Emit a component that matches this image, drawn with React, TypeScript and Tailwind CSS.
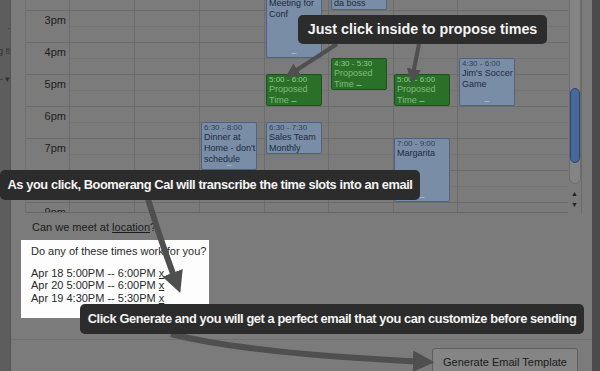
import React from 'react'

type CalEvent = {
    left: number
    top: number
    h: number
    time: string
    lines: string[]
    green?: boolean
    noGrip?: boolean
}

// positions are relative to the grid body (y = 0 at 2pm, 32px per hour)
const events: CalEvent[] = [
    { left: 240, top: -1, h: 81, time: '2:00 - 4:30', lines: ['Planning', 'Meeting for', 'Conf'] },
    { left: 305, top: -1, h: 33, time: '2:00 - 3:00', lines: ['Call with', 'da boss'], noGrip: true },
    { left: 305, top: 80, h: 32, time: '4:30 - 5:30', lines: ['Proposed', 'Time'], green: true },
    { left: 240, top: 96, h: 32, time: '5:00 - 6:00', lines: ['Proposed', 'Time'], green: true },
    { left: 368, top: 96, h: 32, time: '5:00 - 6:00', lines: ['Proposed', 'Time'], green: true },
    { left: 433, top: 80, h: 48, time: '4:30 - 6:00', lines: ["Jim's Soccer", 'Game'] },
    { left: 175, top: 144, h: 48, time: '6:30 - 8:00', lines: ['Dinner at', "Home - don't", 'schedule'] },
    { left: 240, top: 144, h: 32, time: '6:30 - 7:30', lines: ['Sales Team', 'Monthly'], noGrip: true },
    { left: 368, top: 160, h: 64, time: '7:00 - 9:00', lines: ['Margarita'] },
]

const hours = ['2pm', '3pm', '4pm', '5pm', '6pm', '7pm', '8pm', '9pm', '10pm']
const dayWidths = ['w-[65px]', 'w-[65px]', 'w-[65px]', 'w-[64px]', 'w-[65px]', 'w-[64px]', 'flex-1']

function EventBlock({ ev }: { ev: CalEvent }) {
    const box = ev.green
        ? 'bg-[#2b7028] border-[#1c531a] text-[#7fbd7c]'
        : 'bg-[#798da6] border-[#4f6282] text-[#1d2a3c]'
    return (
        <div
            className={`absolute w-[56px] border rounded-[2px] overflow-hidden px-[2px] ${box}`}
            style={{ left: ev.left, top: ev.top, height: ev.h }}
        >
            <div className={`text-[8px] leading-[9px] ${ev.green ? 'text-[#94c991]' : 'text-[#2e3f57]'}`}>{ev.time}</div>
            {ev.lines.map((l, i) => (
                <div key={i} className="text-[9px] leading-[11px] whitespace-nowrap">{l}</div>
            ))}
            {!ev.noGrip && (
                <div className={`absolute bottom-[2px] left-1/2 -translate-x-1/2 w-[5px] h-[2px] border-t ${ev.green ? 'border-[#7fbd7c]' : 'border-[#a3b2c5]'}`} />
            )}
        </div>
    )
}

function Calendar() {
    return (
        <div className="flex h-[213px] pl-[14px]">
            <div className="w-[543px] h-full overflow-hidden border-b border-[#666] border-l border-l-[#717171]">
                <div className="relative -mt-[22px]">
                    {hours.map((h) => (
                        <div key={h} className="flex h-[32px] border-t border-[#6c6c6c]">
                            <div className="w-[43px] text-right pr-[3px] pt-[3px] text-[11px] leading-[13px] text-[#1e1e1e]">{h}</div>
                            {dayWidths.map((w, i) => (
                                <div key={i} className={`${w} border-l border-[#6c6c6c]`}>
                                    <div className="h-[16px] border-b border-[#747474]" />
                                </div>
                            ))}
                        </div>
                    ))}
                    {events.map((ev, i) => (
                        <EventBlock key={i} ev={ev} />
                    ))}
                </div>
            </div>
            {/* scrollbar */}
            <div className="w-[14px] h-full flex flex-col items-center border-r border-[#6a6a6a]">
                <div className="w-[12px] h-[188px] mt-[-4px] rounded-b-full bg-[#848484] border border-[#6b6b6b] flex flex-col items-center">
                    <div className="mt-[91px] w-[10px] h-[75px] rounded-full bg-[#46699a] border border-[#2c4670]" />
                </div>
                <div className="flex-1 flex flex-col items-center justify-center gap-[2px] text-[7px] leading-[9px] text-[#222]">
                    <span>▲</span>
                    <span>▼</span>
                </div>
            </div>
        </div>
    )
}

function Tooltip({ text, className }: { text: string; className: string }) {
    return (
        <div className={`absolute flex items-center justify-center rounded-[5px] bg-[#2c2c2c] text-[#f4f4f4] font-bold whitespace-nowrap ${className}`}>
            {text}
        </div>
    )
}

export default function App() {
    return (
        <div className="relative w-[600px] h-[371px] overflow-hidden flex bg-[#7b7b7b] font-['Liberation_Sans',Arial,sans-serif]">
            {/* left strip of the page behind */}
            <div className="w-[11px] shrink-0 bg-[#5d5d5d] border-r border-[#525252] flex flex-col items-end overflow-hidden text-[9px] leading-[10px] text-[#2f2f2f]">
                <div className="mt-[23px]">·</div>
                <div className="mt-[13px] whitespace-nowrap">g ‼</div>
                <div className="mt-[18px] whitespace-nowrap">- ▾</div>
            </div>

            {/* dialog */}
            <div className="flex-1 flex flex-col">
                <Calendar />

                <div className="pl-[21px] pt-[7px] text-[11px] leading-[14px] text-[#1c1c1c]">
                    Can we meet at <span className="underline">location</span>?
                </div>

                <div className="ml-[10px] mt-[6px] w-[188px] h-[78px] bg-[#fdfdfd] pl-[10px] pt-[5px] text-[11px] leading-[12.5px] text-[#2a2a2a]">
                    <div>Do any of these times work for you?</div>
                    <div className="mt-[9px]">Apr 18 5:00PM -- 6:00PM <span className="underline">x</span></div>
                    <div>Apr 20 5:00PM -- 6:00PM <span className="underline">x</span></div>
                    <div>Apr 19 4:30PM -- 5:30PM <span className="underline">x</span></div>
                </div>

                <div className="mt-auto h-[32px] border-t border-[#707070] flex justify-end pr-[14px] pt-[8px]">
                    <div className="w-[146px] h-[30px] rounded-[3px] bg-[#858585] border border-[#5e5e5e] text-[11px] text-[#1a1a1a] flex justify-center pt-[5px]">
                        Generate Email Template
                    </div>
                </div>
            </div>

            {/* right strip */}
            <div className="w-[8px] shrink-0 bg-[#4b4b4b]" />

            {/* arrows */}
            <svg className="absolute inset-0 pointer-events-none" width="600" height="371">
                <defs>
                    <marker id="head" viewBox="0 0 10 10" refX="7" refY="5" markerWidth="3.6" markerHeight="3.6" orient="auto">
                        <path d="M0 0 L10 5 L0 10 z" fill="#4f4f4f" />
                    </marker>
                </defs>
                <path d="M337 44 L289 75" stroke="#4f4f4f" strokeWidth="4" fill="none" markerEnd="url(#head)" />
                <path d="M419 44 L412 79" stroke="#4f4f4f" strokeWidth="4" fill="none" markerEnd="url(#head)" />
                <path d="M148 199 Q162 245 178 287" stroke="#4f4f4f" strokeWidth="6" fill="none" markerEnd="url(#head)" />
                <path d="M171 334 Q250 354 428 362" stroke="#4f4f4f" strokeWidth="6" fill="none" markerEnd="url(#head)" />
            </svg>

            {/* tips */}
            <Tooltip text="Just click inside to propose times" className="left-[298px] top-[15px] w-[249px] h-[29px] text-[14.3px]" />
            <Tooltip text="As you click, Boomerang Cal will transcribe the time slots into an email" className="left-0 top-[170px] w-[420px] h-[30px] text-[12.8px] tracking-[-0.4px]" />
            <Tooltip text="Click Generate and you will get a perfect email that you can customize before sending" className="left-[80px] top-[304px] w-[504px] h-[30px] text-[12.8px] tracking-[-0.4px]" />
        </div>
    )
}
